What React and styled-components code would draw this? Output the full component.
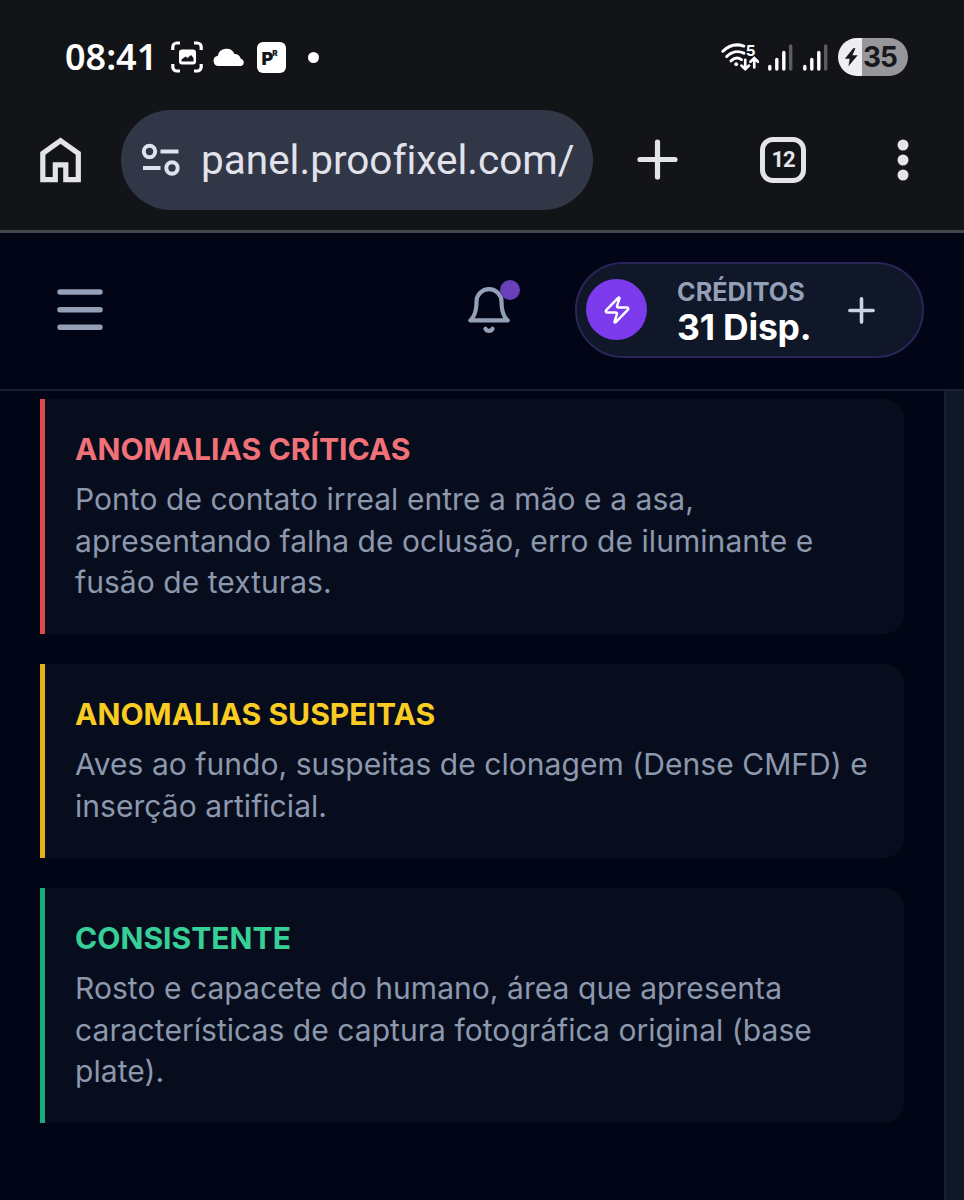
import React from "react";
import styled, { createGlobalStyle } from "styled-components";

const Colors = {
  Chrome: "#131418",
  ChromeIcon: "#e3e3ea",
  UrlBar: "#323747",
  Page: "#020515",
  Card: "#080d1d",
  Slate900: "#0f1728",
  Slate400: "#94a0b5",
  Violet: "#7c3aed",
  White: "#ffffff",
};

const GlobalStyle = createGlobalStyle`
  * {
    box-sizing: border-box;
  }
  body {
    margin: 0;
    background-color: ${Colors.Page};
    font-family: Inter, "Liberation Sans", sans-serif;
  }
  svg {
    display: block;
    flex-shrink: 0;
  }
`;

const Screen = styled.div`
  display: flex;
  flex-direction: column;
  width: 964px;
  height: 1200px;
  overflow: hidden;
  background-color: ${Colors.Page};
`;

const BrowserChrome = styled.header`
  height: 233px;
  background-color: ${Colors.Chrome};
  border-bottom: 3px solid #45454e;
`;

const StatusBar = styled.div`
  display: flex;
  align-items: center;
  justify-content: space-between;
  height: 110px;
  padding: 4px 56px 0 65px;
`;

const StatusGroup = styled.div`
  display: flex;
  align-items: center;
  gap: ${(props) => props.gap};
`;

const Clock = styled.span`
  width: 95px;
  color: ${Colors.White};
  font-family: "Noto Sans", sans-serif;
  font-size: 36px;
  font-weight: 600;
  line-height: 40px;
  white-space: nowrap;
`;

const AppBadge = styled.span`
  display: flex;
  width: 29px;
  height: 31px;
  margin-left: 1px;
  padding: 1px 0 0 5px;
  border-radius: 6px;
  background-color: ${Colors.White};
  color: #15161a;
  font-size: 18px;
  font-weight: 900;
  line-height: 32px;
`;

const BadgeMark = styled.sup`
  margin: 6px 0 0 -1px;
  font-size: 8px;
  line-height: 8px;
`;

const Dot = styled.span`
  width: 11px;
  height: 11px;
  margin-left: 12px;
  border-radius: 50%;
  background-color: ${Colors.White};
`;

const Battery = styled.div`
  display: flex;
  align-items: center;
  gap: 4px;
  width: 70px;
  height: 38px;
  padding-left: 6px;
  border-radius: 19px;
  background: linear-gradient(90deg, #eeeef0 0 24px, #96969b 24px);
  color: #17181c;
  font-size: 28px;
  font-weight: 700;
  letter-spacing: -1px;
  line-height: 38px;
`;

const Toolbar = styled.div`
  display: flex;
  align-items: center;
  height: 100px;
  padding: 0 54px 0 39px;
`;

const UrlBar = styled.div`
  display: flex;
  align-items: center;
  gap: 21px;
  width: 472px;
  height: 100px;
  margin: 0 44px 0 39px;
  padding-left: 20px;
  border-radius: 50px;
  background-color: ${Colors.UrlBar};
`;

const UrlText = styled.span`
  color: #e1e2eb;
  font-family: Roboto, sans-serif;
  font-size: 40.5px;
  font-variant-ligatures: none;
  line-height: 50px;
  white-space: nowrap;
`;

const TabCount = styled.div`
  display: flex;
  align-items: center;
  justify-content: center;
  width: 46px;
  height: 46px;
  margin: 0 91px 0 82px;
  border: 5px solid ${Colors.ChromeIcon};
  border-radius: 13px;
  color: ${Colors.ChromeIcon};
  font-family: Roboto, sans-serif;
  font-size: 22px;
  font-weight: 700;
  letter-spacing: -1px;
  line-height: 36px;
`;

const AppHeader = styled.div`
  display: flex;
  align-items: center;
  height: 158px;
  padding: 0 40px 2px 57px;
  border-bottom: 2px solid #192131;
`;

const BellButton = styled.div`
  position: relative;
  margin: 0 61px 0 auto;
`;

const BellBadge = styled.span`
  position: absolute;
  top: -5px;
  right: -6px;
  width: 20px;
  height: 20px;
  border-radius: 50%;
  background-color: #6841b8;
`;

const Credits = styled.div`
  display: flex;
  align-items: center;
  width: 349px;
  height: 96px;
  padding-left: 9px;
  border: 2px solid #2b2458;
  border-radius: 48px;
  background-color: ${Colors.Slate900};
`;

const CreditsIcon = styled.span`
  display: flex;
  align-items: center;
  justify-content: center;
  width: 61px;
  height: 61px;
  margin-bottom: 1px;
  border-radius: 50%;
  background-color: ${Colors.Violet};
`;

const CreditsInfo = styled.div`
  display: flex;
  flex-direction: column;
  width: 133px;
  margin: 2px 38px 0 30px;
  white-space: nowrap;
`;

const CreditsLabel = styled.span`
  color: ${Colors.Slate400};
  font-size: 25.2px;
  font-weight: 700;
  line-height: 34px;
`;

const CreditsValue = styled.span`
  color: ${Colors.White};
  font-size: 35.5px;
  font-weight: 700;
  letter-spacing: -0.2px;
  line-height: 38px;
`;

const Content = styled.main`
  display: flex;
  flex: 1;
  justify-content: space-between;
  padding-left: 40px;
`;

const CardList = styled.div`
  display: flex;
  flex-direction: column;
  gap: 30px;
  width: 864px;
  padding-top: 8px;
`;

const Card = styled.section`
  height: ${(props) => props.height};
  padding: 30px 20px 30px 30px;
  border-left: 5px solid ${(props) => props.accent};
  border-radius: 0 20px 20px 0;
  background-color: ${Colors.Card};
`;

const CardTitle = styled.h2`
  margin: 0 0 9px;
  color: ${(props) => props.color};
  font-size: 30.1px;
  font-weight: 700;
  line-height: 41px;
`;

const CardText = styled.p`
  margin: 0;
  color: #8c98ad;
  font-size: 30px;
  letter-spacing: 0.05px;
  line-height: 41.5px;
  white-space: nowrap;
`;

const SidePanel = styled.aside`
  width: 20px;
  border-left: 2px solid #172031;
  background-color: ${Colors.Slate900};
`;

const ScreenshotIcon = () => (
  <svg width="32" height="32" viewBox="0 0 32 32" fill="none">
    <path
      d="M1.800 9V6a4 4 0 0 1 4-4H9M23 2h3.200a4 4 0 0 1 4 4v3M30.200 23v3a4 4 0 0 1-4 4H23M9 30H5.800a4 4 0 0 1-4-4v-3"
      stroke="#fff"
      strokeWidth="3.200"
    />
    <rect x="8" y="8.500" width="17" height="15" rx="3" fill="#fff" />
    <path d="M10.500 20.500v-2l4-3 2 1.500 3.500-3 2.500 3v3.500z" fill="#15161a" />
  </svg>
);

const CloudIcon = () => (
  <svg width="32" height="18" viewBox="0 0 32 18" fill="#fff">
    <path d="M5.500 18a5.200 5.200 0 0 1-.7-10.300A8.800 8.800 0 0 1 21.500 6a6.500 6.500 0 0 1 6.300 4.800A3.700 3.700 0 0 1 28 18z" />
  </svg>
);

const WifiIcon = () => (
  <svg width="38" height="30" viewBox="0 0 40 30" fill="none" stroke="#fff" strokeLinecap="round">
    <path d="M2 9C8 3 16 .8 24 3.500" strokeWidth="3.200" />
    <path d="M6 14.500c5-5 12-6.500 18-3.500" strokeWidth="3.200" />
    <path d="M10.500 19c4-3.500 8-3.500 11-1.200" strokeWidth="3.200" />
    <circle cx="16" cy="22.500" r="2" fill="#fff" stroke="none" />
    <text x="26" y="13.500" fill="#fff" stroke="none" fontFamily="Inter, sans-serif" fontSize="16" fontWeight="700">
      5
    </text>
    <path d="M25.500 18v9M21.500 24l4 3.800 4-3.800M35 26v-9M31 20l4-3.800 4 3.800" strokeWidth="2.800" />
  </svg>
);

const SignalIcon = () => (
  <svg width="26" height="27" viewBox="0 0 26 27" strokeWidth="3.400" strokeLinecap="round" stroke="#fff">
    <path d="M1.800 22.500V25M8.800 15.500V25M15.800 8.500V25" />
    <path d="M22.700 2v23" stroke="#5c5d62" />
  </svg>
);

const ChargeIcon = () => (
  <svg width="15" height="20" viewBox="0 0 17 22" fill="#17181c">
    <path d="M10.500 1 1 13h5.500L5 21.500 15.500 9h-6L13 1z" />
  </svg>
);

const HomeIcon = () => (
  <svg width="43" height="48" viewBox="0 0 43 48" fill="none" stroke={Colors.ChromeIcon} strokeWidth="5.200">
    <path d="M3.800 17.300v26.300h12.500V28.800h10.500v14.800h12.500V17.300L21.500 4.600z" />
  </svg>
);

const TuneIcon = () => (
  <svg width="39" height="34" viewBox="0 0 39 34" fill="none" stroke="#dfe2f0" strokeWidth="4">
    <circle cx="8.500" cy="8.500" r="5.700" />
    <path d="M19.500 8.500h18M2 25h17.500" />
    <circle cx="31" cy="25" r="5.700" />
  </svg>
);

const NewTabIcon = () => (
  <svg width="41" height="42" viewBox="0 0 41 42" stroke={Colors.ChromeIcon} strokeWidth="5.200" strokeLinecap="round">
    <path d="M20.500 3v35M3 20.500h35" />
  </svg>
);

const MoreIcon = () => (
  <svg width="12" height="42" viewBox="0 0 12 42" fill={Colors.ChromeIcon}>
    <circle cx="6" cy="6" r="5.500" />
    <circle cx="6" cy="21" r="5.500" />
    <circle cx="6" cy="36" r="5.500" />
  </svg>
);

const MenuIcon = () => (
  <svg width="46" height="42" viewBox="0 0 46 42" stroke={Colors.Slate400} strokeWidth="5.500" strokeLinecap="round">
    <path d="M3 3h40M3 20.700h40M3 38.300h40" />
  </svg>
);

const BellIcon = () => (
  <svg
    width="50"
    height="50"
    viewBox="0 0 24 24"
    fill="none"
    stroke={Colors.Slate400}
    strokeWidth="2"
    strokeLinecap="round"
    strokeLinejoin="round"
  >
    <path d="M6 8a6 6 0 0 1 12 0c0 7 3 9 3 9H3s3-2 3-9" />
    <path d="M10.300 21a1.940 1.940 0 0 0 3.400 0" />
  </svg>
);

const ZapIcon = () => (
  <svg
    width="30"
    height="30"
    viewBox="0 0 24 24"
    fill="none"
    stroke={Colors.White}
    strokeWidth="2"
    strokeLinecap="round"
    strokeLinejoin="round"
  >
    <path d="M4 14a1 1 0 0 1-.78-1.630l9.900-10.200a.5.5 0 0 1 .86.460l-1.920 6.020A1 1 0 0 0 13 10h7a1 1 0 0 1 .78 1.630l-9.900 10.200a.5.5 0 0 1-.86-.460l1.920-6.020A1 1 0 0 0 11 14z" />
  </svg>
);

const AddIcon = () => (
  <svg width="27" height="27" viewBox="0 0 27 27" stroke="#cbd5e1" strokeWidth="3.600" strokeLinecap="round">
    <path d="M13.500 1.900v23.200M1.900 13.500h23.200" />
  </svg>
);

const findings = [
  {
    title: "ANOMALIAS CRÍTICAS",
    color: "#f07178",
    accent: "#dc4a4c",
    height: "235px",
    lines: [
      "Ponto de contato irreal entre a mão e a asa,",
      "apresentando falha de oclusão, erro de iluminante e",
      "fusão de texturas.",
    ],
  },
  {
    title: "ANOMALIAS SUSPEITAS",
    color: "#facc22",
    accent: "#e5b01b",
    height: "194px",
    lines: ["Aves ao fundo, suspeitas de clonagem (Dense CMFD) e", "inserção artificial."],
  },
  {
    title: "CONSISTENTE",
    color: "#37cf98",
    accent: "#1aab7c",
    height: "235px",
    lines: [
      "Rosto e capacete do humano, área que apresenta",
      "características de captura fotográfica original (base",
      "plate).",
    ],
  },
];

const FindingCard = ({ title, color, accent, height, lines }) => {
  return (
    <Card accent={accent} height={height}>
      <CardTitle color={color}>{title}</CardTitle>
      <CardText>
        {lines.map((line) => (
          <React.Fragment key={line}>
            {line}
            <br />
          </React.Fragment>
        ))}
      </CardText>
    </Card>
  );
};

const App = () => {
  return (
    <Screen>
      <GlobalStyle />
      <BrowserChrome>
        <StatusBar>
          <StatusGroup gap="10.5px">
            <Clock>08:41</Clock>
            <ScreenshotIcon />
            <CloudIcon />
            <AppBadge>
              P<BadgeMark>R</BadgeMark>
            </AppBadge>
            <Dot />
          </StatusGroup>
          <StatusGroup gap="9px">
            <WifiIcon />
            <SignalIcon />
            <SignalIcon />
            <Battery>
              <ChargeIcon />
              35
            </Battery>
          </StatusGroup>
        </StatusBar>
        <Toolbar>
          <HomeIcon />
          <UrlBar>
            <TuneIcon />
            <UrlText>panel.proofixel.com/</UrlText>
          </UrlBar>
          <NewTabIcon />
          <TabCount>12</TabCount>
          <MoreIcon />
        </Toolbar>
      </BrowserChrome>
      <AppHeader>
        <MenuIcon />
        <BellButton>
          <BellIcon />
          <BellBadge />
        </BellButton>
        <Credits>
          <CreditsIcon>
            <ZapIcon />
          </CreditsIcon>
          <CreditsInfo>
            <CreditsLabel>CRÉDITOS</CreditsLabel>
            <CreditsValue>31 Disp.</CreditsValue>
          </CreditsInfo>
          <AddIcon />
        </Credits>
      </AppHeader>
      <Content>
        <CardList>
          {findings.map((finding) => (
            <FindingCard key={finding.title} {...finding} />
          ))}
        </CardList>
        <SidePanel />
      </Content>
    </Screen>
  );
};

export default App;
